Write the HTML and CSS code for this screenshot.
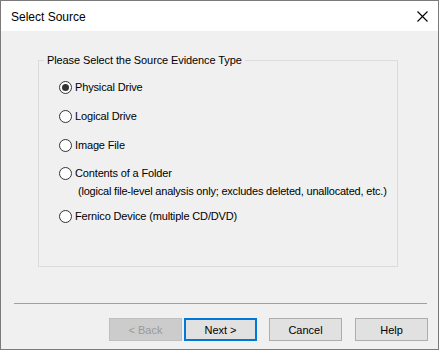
FILE: index.html
```html
<!DOCTYPE html>
<html lang="en">
<head>
  <meta charset="UTF-8" />
  <title>Select Source</title>
  <link rel="stylesheet" href="styles.css">
</head>
<body>

  <div class="ventana">
    <div class="titulo">
      <span>Select Source</span>
      <svg class="cerrar" width="11" height="11" viewBox="0 0 11 11">
        <path d="M0.5 0.5 L10.5 10.5 M10.5 0.5 L0.5 10.5" stroke="#000" stroke-width="1.1" fill="none"/>
      </svg>
    </div>

    <div class="cuerpo">
      <fieldset class="grupo">
        <legend>Please Select the Source Evidence Type</legend>
        <div class="opciones">
          <div class="opcion"><span class="radio marcado"></span>Physical Drive</div>
          <div class="opcion"><span class="radio"></span>Logical Drive</div>
          <div class="opcion"><span class="radio"></span>Image File</div>
          <div class="bloque">
            <div class="opcion"><span class="radio"></span>Contents of a Folder</div>
            <div class="nota">(logical file-level analysis only; excludes deleted, unallocated, etc.)</div>
          </div>
          <div class="opcion final"><span class="radio"></span>Fernico Device (multiple CD/DVD)</div>
        </div>
      </fieldset>

      <div class="separador"></div>

      <div class="botones">
        <button class="boton deshabilitado">&lt; Back</button>
        <button class="boton activo">Next &gt;</button>
        <button class="boton cancelar">Cancel</button>
        <button class="boton ayuda">Help</button>
      </div>
    </div>
  </div>

</body>
</html>
```

FILE: styles.css
```css
body {
  margin: 0;
  padding: 0;
  background: #fff;
  font-family: 'Liberation Sans', Arial, sans-serif;
  font-size: 11px;
  color: #000;
}

.ventana {
  width: 439px;
  height: 350px;
  box-sizing: border-box;
  border: 1px solid #7a7a7a;
  background-color: #f0f0f0;
  display: flex;
  flex-direction: column;
}

.titulo {
  height: 30px;
  background: #fff;
  display: flex;
  align-items: center;
  justify-content: space-between;
  padding: 1px 10px 0 10px;
  font-size: 12px;
  box-sizing: border-box;
}

.cuerpo {
  flex: 1;
}

.grupo {
  margin: 23px 0 0 37px;
  width: 360px;
  height: 213px;
  box-sizing: border-box;
  border: 1px solid #dcdcdc;
  padding: 0;
}

.grupo legend {
  margin-left: 5px;
  padding: 0 3px;
  line-height: 13px;
  letter-spacing: -0.1px;
}

.opciones {
  display: flex;
  flex-direction: column;
  gap: 12px;
  padding: 12px 0 0 20px;
}

.opcion {
  display: flex;
  align-items: center;
  height: 16px;
  letter-spacing: -0.15px;
}

.opcion + .opcion {
  margin-top: 1px;
}

.opcion.final {
  margin-top: -3px;
}

.radio {
  width: 13px;
  height: 13px;
  box-sizing: border-box;
  border: 1px solid #333;
  border-radius: 50%;
  background: #fff;
  margin-right: 3px;
  display: flex;
  align-items: center;
  justify-content: center;
}

.radio.marcado::after {
  content: "";
  width: 7px;
  height: 7px;
  border-radius: 50%;
  background: #333;
}

.nota {
  margin: 2px 0 0 19px;
  line-height: 16px;
  white-space: nowrap;
  letter-spacing: -0.2px;
}

.separador {
  margin: 36px 0 0 13px;
  width: 413px;
  border-top: 1px solid #a0a0a0;
}

.botones {
  display: flex;
  justify-content: flex-end;
  padding-right: 10px;
  margin-top: 14px;
}

.boton {
  width: 73px;
  height: 23px;
  box-sizing: border-box;
  font-family: 'Liberation Sans', Arial, sans-serif;
  font-size: 11px;
  color: #000;
  background: #e1e1e1;
  border: 1px solid #adadad;
  padding: 0;
  margin: 0;
}

.deshabilitado {
  background: #cccccc;
  border-color: #bfbfbf;
  color: #9a9a9a;
}

.activo {
  margin-left: 2px;
  border: 2px solid #0078d7;
}

.cancelar {
  margin-left: 12px;
}

.ayuda {
  margin-left: 13px;
}
```
